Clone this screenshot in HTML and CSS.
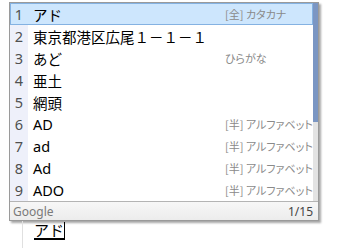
FILE: index.html
```html
<!DOCTYPE html>
<html lang="ja">
<head>
    <meta charset="UTF-8">
    <title>候補ウィンドウ</title>
    <link rel="stylesheet" href="styles.css">
</head>
<body>
    <div class="cand-window">
        <div class="list">
            <div class="rows">
                <div class="row selected">
                    <span class="num">1</span>
                    <span class="text">アド</span>
                    <span class="desc">[全] カタカナ</span>
                </div>
                <div class="row">
                    <span class="num">2</span>
                    <span class="text">東京都港区広尾１－１－１</span>
                    <span class="desc"></span>
                </div>
                <div class="row">
                    <span class="num">3</span>
                    <span class="text">あど</span>
                    <span class="desc">ひらがな</span>
                </div>
                <div class="row">
                    <span class="num">4</span>
                    <span class="text">亜土</span>
                    <span class="desc"></span>
                </div>
                <div class="row">
                    <span class="num">5</span>
                    <span class="text">網頭</span>
                    <span class="desc"></span>
                </div>
                <div class="row">
                    <span class="num">6</span>
                    <span class="text">AD</span>
                    <span class="desc">[半] アルファベット</span>
                </div>
                <div class="row">
                    <span class="num">7</span>
                    <span class="text">ad</span>
                    <span class="desc">[半] アルファベット</span>
                </div>
                <div class="row">
                    <span class="num">8</span>
                    <span class="text">Ad</span>
                    <span class="desc">[半] アルファベット</span>
                </div>
                <div class="row">
                    <span class="num">9</span>
                    <span class="text">ADO</span>
                    <span class="desc">[半] アルファベット</span>
                </div>
            </div>
            <div class="scrollbar">
                <div class="thumb" style="height: 60%;"></div>
            </div>
        </div>
        <div class="footer">
            <span class="brand">Google</span>
            <span class="count">1/15</span>
        </div>
    </div>

    <div class="host">
        <span class="composition">アド</span><span class="caret"></span>
    </div>
</body>
</html>
```

FILE: styles.css
```css
* {
    margin: 0;
    padding: 0;
    box-sizing: border-box;
}

body {
    font-family: "Noto Sans", "Noto Sans CJK JP", sans-serif;
    background: white;
    color: #000;
}

.cand-window {
    margin: 2px 0 0 9px;
    width: 310px;
    background: white;
    border: 1px solid #9a9a9a;
    box-shadow: 2px 2px 2px rgba(0,0,0,0.35);
}

.list {
    display: flex;
}

.rows {
    flex: 1;
}

.row {
    display: flex;
    align-items: center;
    height: 22px;
}

.row .num {
    width: 18px;
    height: 100%;
    background: #eef0fa;
    color: #505050;
    font-size: 14.5px;
    text-align: center;
    line-height: 22px;
}

.row .text {
    flex: 1;
    padding-left: 5px;
    font-size: 14.5px;
    white-space: nowrap;
}

.row .desc {
    flex-shrink: 0;
    width: 88px;
    color: #8a8a8a;
    font-family: "Noto Sans CJK JP", sans-serif;
    font-size: 11px;
    font-feature-settings: "palt";
    white-space: nowrap;
}

.row.selected {
    background: #cde6fd;
    box-shadow: inset 0 0 0 1px #84b2e2;
}

.row.selected .num {
    background: transparent;
}

.scrollbar {
    width: 5px;
    background: #e3e3e3;
}

.thumb {
    background: #7b96c3;
}

.footer {
    display: flex;
    justify-content: space-between;
    align-items: center;
    height: 19px;
    padding: 0 5px 0 3px;
    border-top: 1px solid #b4b4b4;
    background: linear-gradient(#f7f7f7, #ececec);
    font-size: 12px;
}

.footer .brand {
    color: #7a7a7a;
}

.footer .count {
    color: #444;
}

.host {
    margin-left: 22px;
    padding: 1px 0 0 11px;
    height: 27px;
    border-left: 1px solid #e0e0e0;
    display: flex;
    align-items: flex-start;
}

.composition {
    font-family: "Noto Sans CJK JP", sans-serif;
    font-size: 15px;
    line-height: 15px;
    padding-bottom: 1px;
    border-bottom: 2px solid #000;
}

.caret {
    width: 1px;
    height: 18px;
    background: #000;
}
```
